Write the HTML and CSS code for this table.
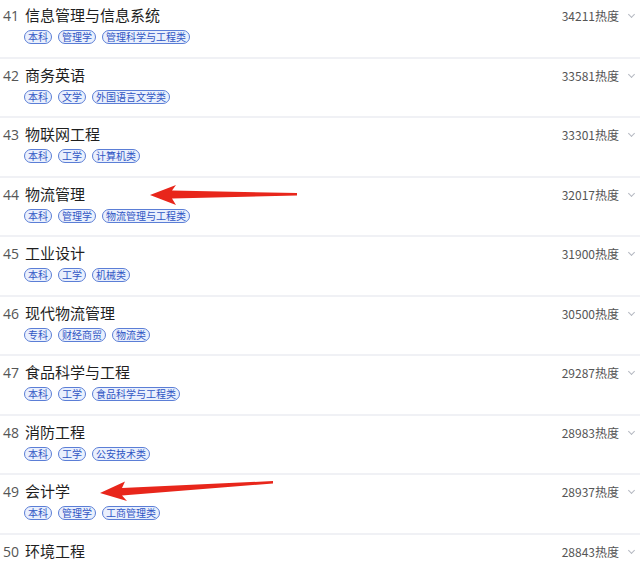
FILE: index.html
```html
<!DOCTYPE html>
<html lang="zh-CN">
<head>
  <meta charset="UTF-8">
  <meta name="viewport" content="width=device-width, initial-scale=1.0">
  <title>专业热度排行</title>
  <link rel="stylesheet" href="styles.css">
</head>
<body>
  <div class="rank-list">
    <div class="rank-row">
      <div class="rank-main">
        <div class="rank-title"><span class="rank-no">41</span>信息管理与信息系统</div>
        <div class="tags"><span class="tag">本科</span><span class="tag">管理学</span><span class="tag">管理科学与工程类</span></div>
      </div>
      <div class="rank-heat">34211热度<span class="chev"></span></div>
    </div>
    <div class="rank-row">
      <div class="rank-main">
        <div class="rank-title"><span class="rank-no">42</span>商务英语</div>
        <div class="tags"><span class="tag">本科</span><span class="tag">文学</span><span class="tag">外国语言文学类</span></div>
      </div>
      <div class="rank-heat">33581热度<span class="chev"></span></div>
    </div>
    <div class="rank-row">
      <div class="rank-main">
        <div class="rank-title"><span class="rank-no">43</span>物联网工程</div>
        <div class="tags"><span class="tag">本科</span><span class="tag">工学</span><span class="tag">计算机类</span></div>
      </div>
      <div class="rank-heat">33301热度<span class="chev"></span></div>
    </div>
    <div class="rank-row">
      <div class="rank-main">
        <div class="rank-title"><span class="rank-no">44</span>物流管理</div>
        <div class="tags"><span class="tag">本科</span><span class="tag">管理学</span><span class="tag">物流管理与工程类</span></div>
      </div>
      <div class="rank-heat">32017热度<span class="chev"></span></div>
    </div>
    <div class="rank-row">
      <div class="rank-main">
        <div class="rank-title"><span class="rank-no">45</span>工业设计</div>
        <div class="tags"><span class="tag">本科</span><span class="tag">工学</span><span class="tag">机械类</span></div>
      </div>
      <div class="rank-heat">31900热度<span class="chev"></span></div>
    </div>
    <div class="rank-row">
      <div class="rank-main">
        <div class="rank-title"><span class="rank-no">46</span>现代物流管理</div>
        <div class="tags"><span class="tag">专科</span><span class="tag">财经商贸</span><span class="tag">物流类</span></div>
      </div>
      <div class="rank-heat">30500热度<span class="chev"></span></div>
    </div>
    <div class="rank-row">
      <div class="rank-main">
        <div class="rank-title"><span class="rank-no">47</span>食品科学与工程</div>
        <div class="tags"><span class="tag">本科</span><span class="tag">工学</span><span class="tag">食品科学与工程类</span></div>
      </div>
      <div class="rank-heat">29287热度<span class="chev"></span></div>
    </div>
    <div class="rank-row">
      <div class="rank-main">
        <div class="rank-title"><span class="rank-no">48</span>消防工程</div>
        <div class="tags"><span class="tag">本科</span><span class="tag">工学</span><span class="tag">公安技术类</span></div>
      </div>
      <div class="rank-heat">28983热度<span class="chev"></span></div>
    </div>
    <div class="rank-row">
      <div class="rank-main">
        <div class="rank-title"><span class="rank-no">49</span>会计学</div>
        <div class="tags"><span class="tag">本科</span><span class="tag">管理学</span><span class="tag">工商管理类</span></div>
      </div>
      <div class="rank-heat">28937热度<span class="chev"></span></div>
    </div>
    <div class="rank-row">
      <div class="rank-main">
        <div class="rank-title"><span class="rank-no">50</span>环境工程</div>
      </div>
      <div class="rank-heat">28843热度<span class="chev"></span></div>
    </div>
  </div>

  <!-- red annotation arrows drawn over the list -->
  <svg class="arrows" width="640" height="562" viewBox="0 0 640 562">
    <path d="M297 193 L172 190.5 L176 185 L150 195 L176 205 L172 198.5 L297 195.5 Z" fill="#e8261b"/>
    <path d="M273 481 L122 488 L125 481.5 L100 493 L127 501 L122 495.5 L273 483.5 Z" fill="#e8261b"/>
  </svg>
</body>
</html>
```

FILE: styles.css
```css
body {
  margin: 0;
  background: #fff;
  font-family: "Noto Sans CJK SC", "Noto Sans", sans-serif;
  color: #222;
  overflow: hidden;
}
.rank-list {
  margin-top: -1px;
}
.rank-row {
  display: flex;
  justify-content: space-between;
  align-items: flex-start;
  height: 57.5px;
  border-bottom: 2px solid #f0f1f5;
}
.rank-main {
  display: flex;
  flex-direction: column;
  padding-top: 7px;
}
.rank-title {
  font-size: 15px;
  line-height: 18px;
  color: #1f1f1f;
}
.rank-no {
  display: inline-block;
  width: 25px;
  padding-left: 3px;
  box-sizing: border-box;
  color: #555;
  font-family: "Open Sans", "Noto Sans", sans-serif;
  font-size: 14px;
}
.tags {
  display: flex;
  gap: 6px;
  margin-top: 5px;
  padding-left: 24px;
}
.tag {
  font-size: 10px;
  line-height: 12px;
  padding: 0 3px;
  border: 1px solid #5b7ed6;
  border-radius: 7px;
  color: #2f55c4;
  background: #eaf0fd;
}
.rank-heat {
  display: flex;
  align-items: center;
  padding-top: 8px;
  font-size: 12px;
  line-height: 18px;
  color: #555;
}
.chev {
  display: inline-block;
  width: 4px;
  height: 4px;
  margin: 0 6px 3px 10px;
  border-right: 1px solid #b5b9c2;
  border-bottom: 1px solid #b5b9c2;
  transform: rotate(45deg);
}
.arrows {
  position: absolute;
  left: 0;
  top: 0;
  pointer-events: none;
}
```
